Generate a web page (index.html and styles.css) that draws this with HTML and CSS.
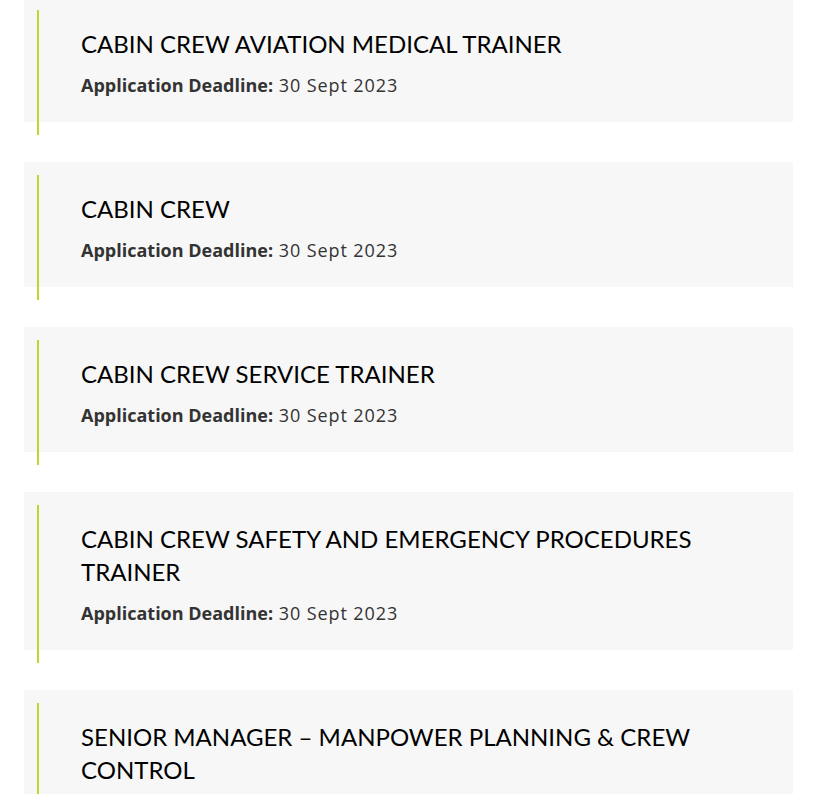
FILE: index.html
```html
<!DOCTYPE html>
<html lang="en">
<head>
<meta charset="utf-8">
<title>Careers</title>
<link rel="stylesheet" href="styles.css">
</head>
<body>
<ul class="jobs">
  <li class="job">
    <h3 class="job-title">CABIN CREW AVIATION MEDICAL TRAINER</h3>
    <p class="job-meta"><strong>Application Deadline:</strong> <span class="job-date">30 Sept 2023</span></p>
  </li>
  <li class="job">
    <h3 class="job-title">CABIN CREW</h3>
    <p class="job-meta"><strong>Application Deadline:</strong> <span class="job-date">30 Sept 2023</span></p>
  </li>
  <li class="job">
    <h3 class="job-title">CABIN CREW SERVICE TRAINER</h3>
    <p class="job-meta"><strong>Application Deadline:</strong> <span class="job-date">30 Sept 2023</span></p>
  </li>
  <li class="job">
    <h3 class="job-title">CABIN CREW SAFETY AND EMERGENCY PROCEDURES TRAINER</h3>
    <p class="job-meta"><strong>Application Deadline:</strong> <span class="job-date">30 Sept 2023</span></p>
  </li>
  <li class="job">
    <h3 class="job-title">SENIOR MANAGER – MANPOWER PLANNING &amp; CREW CONTROL</h3>
    <p class="job-meta"><strong>Application Deadline:</strong> <span class="job-date">30 Sept 2023</span></p>
  </li>
</ul>
</body>
</html>
```
FILE: styles.css
```css
html, body {
  margin: 0;
  padding: 0;
  background: #ffffff;
  overflow: hidden;
}

body {
  font-family: Lato, "Liberation Sans", sans-serif;
}

.jobs {
  list-style: none;
  margin: -3px 0 0 0;
  padding: 0 31px 0 24px;
  display: flex;
  flex-direction: column;
  gap: 40px;
}

.job {
  position: relative;
  background: #f7f7f7;
  padding: 30px 40px 25px 57px;
}

.job::before {
  content: "";
  position: absolute;
  left: 13px;
  top: 13px;
  width: 2px;
  height: 100%;
  background: #c2d52b;
}

.job-title {
  margin: 0;
  font-size: 24px;
  line-height: 33px;
  font-weight: 400;
  color: #000000;
}

.job-meta {
  margin: 13px 0 0 0;
  font-family: "Open Sans", Lato, sans-serif;
  font-size: 18px;
  line-height: 24px;
  color: #333333;
}

.job-meta strong {
  font-weight: 700;
}

.job-date {
  margin-left: 1px;
  letter-spacing: 0.9px;
}
```
